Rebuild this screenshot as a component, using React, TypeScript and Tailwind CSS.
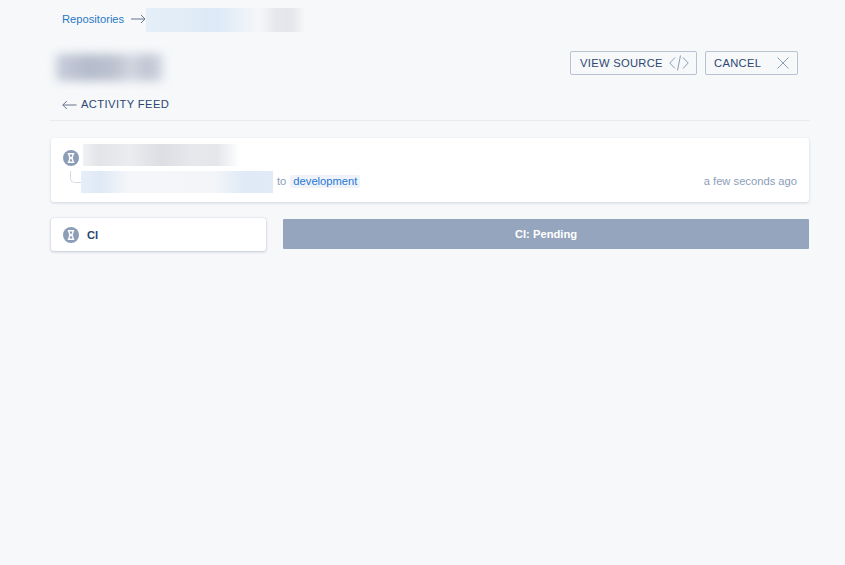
import React from 'react';

// Hourglass status badge, used on the commit row and the CI row
function PendingIcon({ className = '' }: { className?: string }) {
  return (
    <svg width="16" height="16" viewBox="0 0 16 16" className={`shrink-0 ${className}`}>
      <circle cx="8" cy="8" r="8" fill="#8c9db8" />
      <path
        d="M5.3 3.8h5.4M5.3 12.2h5.4M5.8 4c0 1.9 1 2.9 1.7 4-.7 1.1-1.7 2.1-1.7 4M10.2 4c0 1.9-1 2.9-1.7 4 .7 1.1 1.7 2.1 1.7 4M6.4 8h3.2"
        fill="none"
        stroke="#fff"
        strokeWidth="1.4"
        strokeLinecap="round"
        strokeLinejoin="round"
      />
    </svg>
  );
}

export default function App() {
  return (
    <div className="min-h-[565px] bg-[#f6f8fa] pl-[50px] pr-[35px] font-['Liberation_Sans',Arial,sans-serif] text-[11.2px] text-[#2c4770]">
      {/* Breadcrumb */}
      <div className="flex h-[40px] items-center pl-[12px]">
        <span className="mb-[2px] text-[#2b78c5]">Repositories</span>
        <svg width="15" height="10" viewBox="0 0 15 10" className="mb-[2px] ml-[7px]">
          <path d="M0 5h14M10 1l4 4-4 4" fill="none" stroke="#66758f" strokeWidth="1" />
        </svg>
        <div className="h-[24px] w-[158px] bg-[linear-gradient(90deg,#e6eff8_0%,#dce9f6_45%,#f0f4f9_66%,#f5f6f8_72%,#e6e8ec_82%,#e4e6eb_92%,#f5f6f8_100%)]" />
      </div>

      {/* Title row and actions */}
      <div className="flex items-start justify-between">
        <div className="flex flex-col">
          <div className="ml-[6px] mt-[14px] h-[27px] w-[107px] rounded-[4px] bg-[linear-gradient(90deg,#c9cedb_0%,#b4bbcb_30%,#bcc2d0_55%,#d3d7e1_70%,#bfc5d3_85%,#d3d7e1_100%)] blur-[5px]" />
          <div className="mt-[17px] flex h-[13px] items-center pl-[12px] tracking-[0.4px]">
            <svg width="15" height="10" viewBox="0 0 15 10" className="mr-[4px]">
              <path d="M14.5 5H0.8M4.8 1l-4 4 4 4" fill="none" stroke="#66758f" strokeWidth="1" />
            </svg>
            ACTIVITY FEED
          </div>
        </div>
        <div className="mr-[12px] mt-[11px] flex gap-[8px]">
          <button className="flex h-[24px] w-[127px] items-center justify-between rounded-[2px] border border-[#b8c2d2] pl-[9px] pr-[7px] tracking-[0.3px]">
            VIEW SOURCE
            <svg width="20" height="16" viewBox="0 0 20 16">
              <path d="M6 2.5 0.8 8 6 13.5M14 2.5 19.2 8 14 13.5" fill="none" stroke="#8c9db8" strokeWidth="1" />
              <path d="M11.5 0.5 8.5 15.5" fill="none" stroke="#8c9db8" strokeWidth="1" />
            </svg>
          </button>
          <button className="flex h-[24px] w-[93px] items-center justify-between rounded-[2px] border border-[#b8c2d2] px-[8px] tracking-[0.3px]">
            CANCEL
            <svg width="12" height="12" viewBox="0 0 12 12">
              <path d="M0.5 0.5 11.5 11.5M11.5 0.5 0.5 11.5" fill="none" stroke="#8c9db8" strokeWidth="1" />
            </svg>
          </button>
        </div>
      </div>

      <div className="mt-[9px] border-t border-[#e9ebf0]" />

      {/* Commit card */}
      <div className="mx-[1px] mt-[17px] h-[64px] rounded-[3px] bg-white px-[12px] pt-[6px] shadow-[0_1px_3px_rgba(60,75,105,0.2)]">
        <div className="flex items-start">
          <PendingIcon className="mt-[6px]" />
          <div className="ml-[4px] h-[22px] w-[157px] bg-[linear-gradient(90deg,#f0f1f3_0%,#e2e4e8_10%,#ebecef_30%,#dcdee3_50%,#e6e8ec_70%,#e4e6ea_85%,#ffffff_100%)]" />
        </div>
        <div className="mt-[5px] flex h-[22px] items-center">
          <div className="mb-[11px] ml-[7px] h-[12px] w-[11px] rounded-bl-[5px] border-b border-l border-[#d5dbe5]" />
          <div className="h-[22px] w-[192px] bg-[linear-gradient(90deg,#e6eef8_0%,#dfe9f6_10%,#f5f6f9_25%,#f3f5f8_70%,#dfeaf6_85%,#e0ebf7_100%)]" />
          <span className="mb-[2px] ml-[4px] text-[#8c9db8]">to</span>
          <span className="mb-[2px] ml-[4px] rounded-[2px] bg-[#eff3f9] px-[3px] leading-[13px] text-[#1f78d6]">development</span>
          <span className="mb-[2px] ml-auto text-[#8c9db8]">a few seconds ago</span>
        </div>
      </div>

      {/* CI check and log header */}
      <div className="mx-[1px] mt-[16px] flex gap-[17px]">
        <div className="flex h-[33px] w-[215px] items-center rounded-[3px] bg-white pl-[12px] shadow-[0_0_0_1px_rgba(60,75,105,0.04),0_1px_3px_rgba(60,75,105,0.25)]">
          <PendingIcon />
          <span className="ml-[8px] mt-[1px] font-bold">CI</span>
        </div>
        <div className="mt-[1px] flex h-[30px] flex-1 items-center justify-center rounded-[1px] bg-[#94a5bd] font-bold text-white">
          CI: Pending
        </div>
      </div>
    </div>
  );
}
